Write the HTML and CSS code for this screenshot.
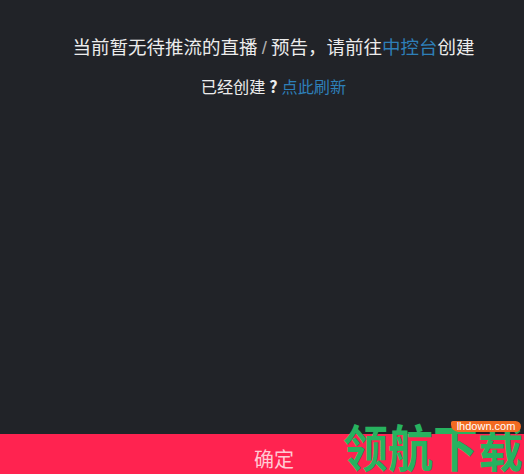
FILE: index.html
```html
<!DOCTYPE html>
<html lang="zh-CN">
<head>
    <meta charset="UTF-8">
    <title>确定</title>
    <link rel="stylesheet" href="styles.css">
</head>
<body>
    <div class="dialog">
        <div class="content">
            <p class="line first">当前暂无待推流的直播 <span class="slash">/</span> 预告，请前往<a class="link">中控台</a>创建</p>
            <p class="line second">已经创建<span class="qmark">?</span><a class="link">点此刷新</a></p>
        </div>
        <button class="confirm">确定</button>
    </div>
    <div class="watermark">
        <span class="mark-text">领航下载</span>
        <span class="mark-badge">lhdown.com</span>
    </div>
</body>
</html>
```

FILE: styles.css
```css
html, body {
    margin: 0;
    padding: 0;
    height: 100%;
    overflow: hidden;
}

body {
    background: #212328;
    font-family: "Noto Sans CJK SC", "Liberation Sans", sans-serif;
}

.dialog {
    display: flex;
    flex-direction: column;
    height: 474px;
}

.content {
    flex: 1;
    padding: 33px 0 0 23px;
    text-align: center;
    color: #ececec;
    font-size: 18.5px;
}

.line {
    margin: 0;
    line-height: 26px;
}

.second {
    margin-top: 12px;
    font-size: 16.2px;
}

.qmark {
    display: inline-block;
    width: 16px;
    text-align: center;
    font-weight: 700;
}

.slash {
    color: #b0b0b0;
    font-family: "Liberation Sans", sans-serif;
}

.link {
    color: #2e7fb8;
}

.confirm {
    height: 40px;
    border: none;
    background: #ff2350;
    color: #ffc9d3;
    font-family: inherit;
    font-size: 20px;
    padding: 9px 0 0 24px;
}

.watermark {
    position: absolute;
    left: 343px;
    top: 414px;
    width: 180px;
    height: 60px;
}

.mark-text {
    position: absolute;
    left: 0;
    top: 2px;
    color: #27b25f;
    font-size: 45px;
    line-height: 60px;
    font-weight: 700;
    white-space: nowrap;
    transform: scaleY(1.1);
}

.mark-badge {
    position: absolute;
    left: 108px;
    top: 7px;
    width: 70px;
    height: 11px;
    background: #f26a21;
    border-radius: 2px 6px 6px 8px;
    color: #fff;
    font-family: "Liberation Sans", sans-serif;
    font-size: 11px;
    line-height: 11px;
    text-align: center;
}
```
